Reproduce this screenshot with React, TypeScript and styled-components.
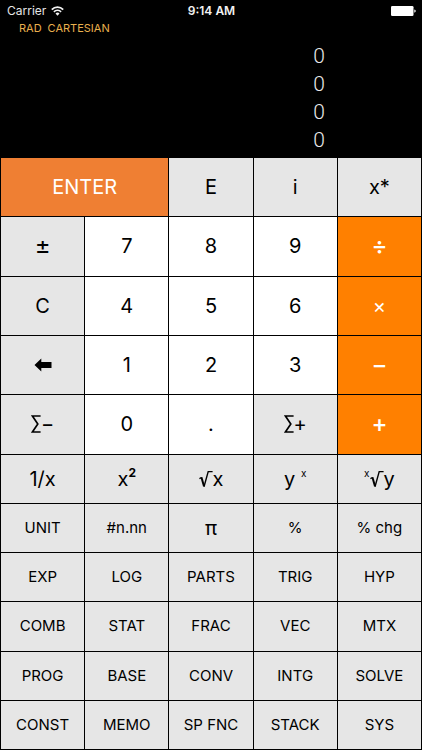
import React from "react";
import styled, { createGlobalStyle, css } from "styled-components";

const GlobalStyle = createGlobalStyle`
  *, *::before, *::after { box-sizing: border-box; }
  body {
    margin: 0;
    background: #000;
    font-family: Inter, "Liberation Sans", sans-serif;
  }
`;

const Screen = styled.main`
  display: flex;
  flex-direction: column;
  min-height: 100vh;
  background: #000;
  color: #fff;
`;

const StatusBar = styled.header`
  display: grid;
  grid-template-columns: 1fr auto 1fr;
  align-items: center;
  height: 22px;
  padding: 0 6px 0 7px;
  font-size: 12px;
  line-height: 22px;
`;

const Carrier = styled.span`
  display: flex;
  align-items: center;
  gap: 5px;
  color: #e6e6e6;
`;

const Clock = styled.time`
  font-weight: 600;
  color: #f2f2f2;
`;

const BatterySlot = styled.span`
  display: flex;
  justify-content: flex-end;
`;

const Modes = styled.div`
  display: flex;
  gap: 6px;
  padding-left: 19px;
  font-size: 11px;
  line-height: 13px;
  color: #eab04e;
`;

const Stack = styled.ol`
  list-style: none;
  margin: 0;
  padding: 7px 97px 3px 19px;
  text-align: right;
  font-family: Roboto, "Liberation Sans", sans-serif;
  font-size: 21px;
  font-weight: 300;
  line-height: 28px;
  color: #e8e8e8;
`;

const StackLevel = styled.li`
  height: 28px;
`;

const Keypad = styled.section`
  flex: 1;
  display: grid;
  grid-template-columns: repeat(5, minmax(0, 1fr));
  grid-template-rows: repeat(5, minmax(40px, 58fr)) repeat(6, minmax(34px, 48fr));
  gap: 1px;
  padding: 1px;
  background: #000;
`;

type Tone = "gray" | "white" | "orange" | "enter";
type Size = "small" | "large" | "sign" | "operator";

const tones = {
  gray: css`background: #e6e6e6; color: #000;`,
  white: css`background: #fff; color: #000;`,
  orange: css`background: #ff8000; color: #fff;`,
  enter: css`background: #ef7f33; color: #fff;`,
};

const sizes = {
  small: css`font-size: 15px;`,
  large: css`font-size: 20px;`,
  sign: css`font-size: 24px;`,
  operator: css`font-size: 24px; font-weight: 500;`,
};

const Key = styled.button<{ $tone: Tone; $size: Size; $span: number }>`
  display: flex;
  align-items: center;
  justify-content: center;
  grid-column: span ${(p) => p.$span};
  border: 0;
  border-radius: 0;
  padding: 0;
  font-family: inherit;
  font-weight: 400;
  line-height: 24px;
  white-space: pre;
  cursor: pointer;
  ${(p) => tones[p.$tone]}
  ${(p) => sizes[p.$size]}
  &:active { filter: brightness(0.85); }
`;

const Power = styled.sup<{ $bold?: boolean }>`
  align-self: flex-start;
  font-size: ${(p) => (p.$bold ? 12 : 10)}px;
  font-weight: ${(p) => (p.$bold ? 700 : 400)};
  line-height: 12px;
`;

const Formula = styled.span`
  display: flex;
  align-items: center;
  height: 24px;
`;

const WifiIcon = () => (
  <svg width="13" height="10" viewBox="0 0 13 10" fill="none" stroke="#f2f2f2" aria-hidden="true">
    <path d="M.8 3.6a8 8 0 0 1 11.4 0" strokeWidth="1.8" />
    <path d="M2.9 5.8a5 5 0 0 1 7.2 0" strokeWidth="1.7" />
    <path d="M6.5 9.7 4.5 7.6a2.8 2.8 0 0 1 4 0z" fill="#f2f2f2" stroke="none" />
  </svg>
);

const BatteryIcon = () => (
  <svg width="25" height="10" viewBox="0 0 25 10" fill="#fff" role="img" aria-label="Battery full">
    <rect width="22.5" height="10" rx="1.3" />
    <path d="M23.3 3.4c.9.1 1.4.8 1.4 1.6s-.5 1.5-1.4 1.6z" />
  </svg>
);

const BackspaceIcon = () => (
  <svg width="18" height="14" viewBox="0 0 18 14" aria-hidden="true">
    <path d="M.5 7 7.3.4v3.7h10.2v5.8H7.3v3.7z" fill="#000" />
  </svg>
);

const SumIcon = () => (
  <svg width="10" height="18" viewBox="0 0 10 18" fill="none" stroke="#000" strokeWidth="1.7" aria-hidden="true">
    <path d="M9.6 1H1.4l5.4 8-5.4 8H9.6" />
  </svg>
);

const RootIcon = () => (
  <svg width="14" height="18" viewBox="0 0 14 18" fill="none" stroke="#000" aria-hidden="true">
    <path d="M.4 8.6 2.6 7.5" strokeWidth="1.2" />
    <path d="M2.4 7.3 5 16.2" strokeWidth="2" />
    <path d="M5 16.8 9.2 1.6H13.6" strokeWidth="1.4" />
  </svg>
);

interface KeyDef {
  id: string;
  face?: React.ReactNode;
  tone?: Tone;
  size?: Size;
  span?: number;
}

const digit = (id: string): KeyDef => ({ id, tone: "white", size: "large" });
const large = (id: string, face?: React.ReactNode): KeyDef => ({ id, face, size: "large" });
const operator = (id: string, face: string): KeyDef => ({ id, face, tone: "orange", size: "operator" });
const menu = (id: string): KeyDef => ({ id });

const keys: KeyDef[] = [
  { id: "ENTER", tone: "enter", size: "large", span: 2 },
  large("E"), large("i"), large("x*"),

  { id: "±", size: "sign" }, digit("7"), digit("8"), digit("9"), operator("Divide", "÷"),
  large("C"), digit("4"), digit("5"), digit("6"),
  { id: "Multiply", face: "×", tone: "orange", size: "large" },
  large("Backspace", <BackspaceIcon />), digit("1"), digit("2"), digit("3"), operator("Subtract", "−"),
  large("Sum minus", <Formula><SumIcon />−</Formula>), digit("0"), digit("."),
  large("Sum plus", <Formula><SumIcon />+</Formula>), operator("Add", "+"),

  large("1/x"),
  large("x squared", <Formula>x<Power $bold>2</Power></Formula>),
  large("Square root of x", <Formula><RootIcon />x</Formula>),
  large("y to the x", <Formula>{"y "}<Power>x</Power></Formula>),
  large("x root of y", <Formula><Power>x</Power><RootIcon />y</Formula>),

  menu("UNIT"), menu("#n.nn"), large("π"), menu("%"), menu("% chg"),
  menu("EXP"), menu("LOG"), menu("PARTS"), menu("TRIG"), menu("HYP"),
  menu("COMB"), menu("STAT"), menu("FRAC"), menu("VEC"), menu("MTX"),
  menu("PROG"), menu("BASE"), menu("CONV"), menu("INTG"), menu("SOLVE"),
  menu("CONST"), menu("MEMO"), menu("SP FNC"), menu("STACK"), menu("SYS"),
];

const stack = ["0", "0", "0", "0"];

export default function App() {
  return (
    <Screen>
      <GlobalStyle />
      <StatusBar>
        <Carrier>Carrier<WifiIcon /></Carrier>
        <Clock>9:14 AM</Clock>
        <BatterySlot><BatteryIcon /></BatterySlot>
      </StatusBar>
      <Modes>
        <span>RAD</span>
        <span>CARTESIAN</span>
      </Modes>
      <Stack>
        {stack.map((value, level) => (
          <StackLevel key={level}>{value}</StackLevel>
        ))}
      </Stack>
      <Keypad>
        {keys.map(({ id, face, tone = "gray", size = "small", span = 1 }) => (
          <Key
            key={id}
            type="button"
            $tone={tone}
            $size={size}
            $span={span}
            aria-label={face ? id : undefined}
          >
            {face ?? id}
          </Key>
        ))}
      </Keypad>
    </Screen>
  );
}
